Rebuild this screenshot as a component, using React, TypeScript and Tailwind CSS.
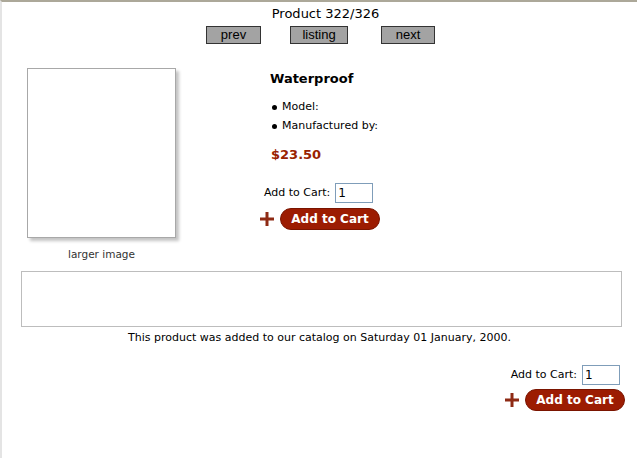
import React from 'react';

const Plus = () => (
  <svg width="16" height="16" viewBox="0 0 16 16" className="shrink-0">
    <path d="M8 1v14M1 8h14" stroke="#8e2a14" strokeWidth="3" />
  </svg>
);

const QtyRow = () => (
  <div className="flex items-center gap-[5px]">
    <span className="text-[11px]">Add to Cart:</span>
    <div className="flex h-[20px] w-[38px] items-center border border-[#7f9db9] bg-white px-[2px] text-[12px]">1</div>
  </div>
);

const CartButton = () => (
  <div className="flex items-center gap-[5px]">
    <Plus />
    <button className="flex h-[22px] w-[100px] items-center justify-center rounded-full border border-[#7a1400] bg-[#9c1c02] text-[12px] font-bold text-white">
      Add to Cart
    </button>
  </div>
);

const NavButton = ({ label, w, ml }: { label: string; w: string; ml: string }) => (
  <button className={`${w} ${ml} h-[18px] border border-[#333] bg-[#a3a3a3] font-['Liberation_Sans',Arial,sans-serif] text-[13px] leading-[16px] text-black`}>
    {label}
  </button>
);

export default function App() {
  return (
    <div className="min-h-[458px] w-[637px] border-l-2 border-t-2 border-l-[#e4e4e4] border-t-[#aca899] bg-white font-['DejaVu_Sans',sans-serif] text-[11px] text-black">
      <div className="pl-[12px] pt-[5px] text-center text-[13px] leading-[14px]">Product 322/326</div>
      <div className="mt-[5px] flex">
        <NavButton label="prev" w="w-[55px]" ml="ml-[204px]" />
        <NavButton label="listing" w="w-[58px]" ml="ml-[29px]" />
        <NavButton label="next" w="w-[54px]" ml="ml-[33px]" />
      </div>

      <div className="mt-[24px] flex">
        <div className="ml-[25px] flex w-[149px] flex-col items-center">
          <div className="h-[170px] w-[149px] border border-[#a8a8a8] bg-white shadow-[3px_3px_3px_#c4c4c4]" />
          <div className="mt-[9px] text-[10.5px] leading-[14px] text-[#333]">larger image</div>
        </div>

        <div className="ml-[83px] flex flex-col">
          <div className="pl-[11px] pt-[2px] text-[13px] font-bold leading-[18px]">Waterproof</div>
          <ul className="mt-[12px] flex flex-col gap-[5px] pl-[13px] text-[11px] leading-[14px]">
            <li className="flex items-center gap-[5px]"><span className="inline-block h-[5px] w-[5px] rounded-full bg-black" />Model:</li>
            <li className="flex items-center gap-[5px]"><span className="inline-block h-[5px] w-[5px] rounded-full bg-black" />Manufactured by:</li>
          </ul>
          <div className="mt-[14px] pl-[12px] text-[13px] font-bold leading-[16px] text-[#992200]">$23.50</div>
          <div className="mt-[20px] pl-[5px]">
            <QtyRow />
          </div>
          <div className="mt-[5px]">
            <CartButton />
          </div>
        </div>
      </div>

      <div className="ml-[19px] mt-[10px] h-[56px] w-[601px] border border-[#bdbdbd]" />
      <div className="mt-[4px] text-center text-[11px] leading-[14px]">
        This product was added to our catalog on Saturday 01 January, 2000.
      </div>

      <div className="mr-[12px] mt-[20px] flex flex-col items-end">
        <div className="pr-[5px]">
          <QtyRow />
        </div>
        <div className="mt-[4px]">
          <CartButton />
        </div>
      </div>
    </div>
  );
}
